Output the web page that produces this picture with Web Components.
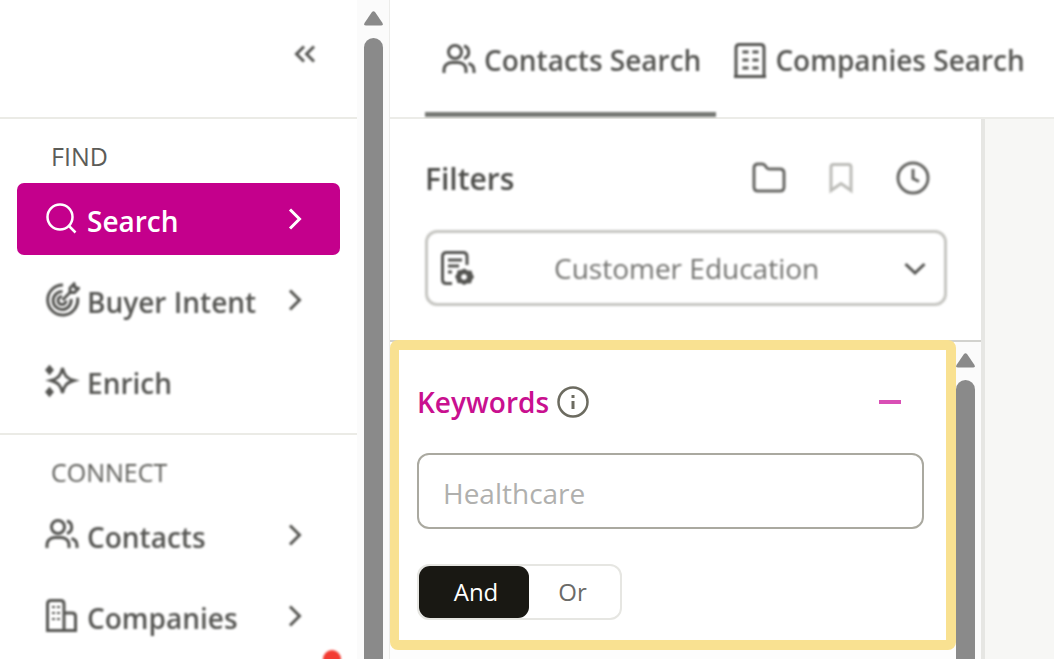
<!DOCTYPE html>
<html lang="en">
<head>
<meta charset="utf-8">
<meta name="viewport" content="width=device-width, initial-scale=1">
<title>Contacts Search</title>
<style>
  body { margin: 0; background: #fff; font-family: "Open Sans", "Noto Sans", sans-serif; color: #4a4a47; }
</style>
</head>
<body>
<search-app></search-app>

<script>
const define = (name, html, setup) => {
  const template = document.createElement('template');
  template.innerHTML = '<style>*{box-sizing:border-box}</style>' + html;
  customElements.define(name, class extends HTMLElement {
    constructor() {
      super();
      this.attachShadow({ mode: 'open' }).append(template.content.cloneNode(true));
    }
    connectedCallback() { if (setup) setup(this, this.shadowRoot); }
  });
};

const ICONS = {
  search: '<circle cx="16" cy="16" r="12.500"/><path d="M25 25l6.500 6.500"/>',
  target: '<path d="M19 3A15 15 0 1 0 33.500 15.500"/><path d="M18.500 9.500A9 9 0 1 0 27 17"/><path d="M18 14.500a4 4 0 1 0 4 4"/><path d="M18.500 18L26 10.500M26 10.500V6l4-4 1 3.500 3.500 1-4 4z"/>',
  sparkle: '<path d="M18.500 5c1.500 7 4 10.500 11.500 12.500-7.500 2-10 5.500-11.500 12.500-1.500-7-4-10.500-11.500-12.500 7.500-2 10-5.500 11.500-12.500z"/><path fill="currentColor" d="M5.500 4l2.500 3-2.500 3L3 7zM5.500 26l2.500 3-2.500 3L3 29z"/>',
  people: '<circle cx="14" cy="10" r="6.500"/><path d="M3 31v-3c0-5 4-7.500 8-7.500h6c4 0 8 2.500 8 7.500v3M23 4a6.500 6.500 0 0 1 0 12.500M27.500 21.500c3.500 1 5.500 3.500 5.500 7V31"/>',
  buildings: '<path d="M2 32.500h31M3.500 32V6q0-3.500 3.500-3.500h9.500Q20 2.500 20 6v26M20 15h8q3.500 0 3.500 3.500V32"/><path stroke-width="2" stroke-dasharray="3 2" d="M8 9h8M8 15h8M8 21h8"/>',
  building: '<path d="M2 34.500h32M4 34V6q0-3.500 3.500-3.500h21Q32 2.500 32 6v28"/><path stroke-dasharray="6 4" d="M10.500 10h16M10.500 18h16M10.500 26h16"/>',
  folder: '<path d="M3 8q0-4 4-4h4q2 0 3 1.500l1.500 2q1 1.500 3 1.500H29q4 0 4 4v14q0 4-4 4H7q-4 0-4-4z"/>',
  bookmark: '<path d="M8 30.500V7q0-2.500 2.500-2.500h15Q28 4.500 28 7v23.500l-10-7z"/>',
  clock: '<circle cx="18" cy="18" r="15"/><path d="M18 9v9.500l6 3"/>',
  report: '<path d="M13 33.500H7.500q-4 0-4-4v-23q0-4 4-4H24q4 0 4 4V15M9 10h14M9 16h11M9 22h4"/><path fill="currentColor" stroke="none" fill-rule="evenodd" d="M25.500 18.500l3 2 4 .2 1 3.300 1.500 3-2 3-1 3.300-4 .2-3 1.500-3-1.700-3.500-.3-1-3.500-1.500-3 2-3 .5-3 3.500-.5zM25 24a3 3 0 1 0 .1 0z"/>',
  info: '<circle cx="18" cy="18" r="14.500"/><path stroke-width="3" d="M18 17v8M18 11v3"/>',
  right: '<path d="M13 8.500l9.500 9.500-9.500 9.500"/>',
  down: '<path d="M8.500 14l9.500 9 9.500-9"/>',
  collapse: '<path d="M17 10.500L9.500 18l7.500 7.500M27 10.500L19.500 18l7.500 7.500"/>',
  minus: '<path stroke-width="4" d="M7 18h22"/>'
};

define('ui-icon', `
  <style>:host{display:block;flex:none;width:36px;height:36px} svg{display:block;width:100%;height:100%}</style>
  <svg viewBox="0 0 36 36" fill="none" stroke="currentColor" aria-hidden="true"></svg>`,
  (el, root) => {
    const svg = root.querySelector('svg');
    svg.setAttribute('stroke-width', el.getAttribute('weight') || '3');
    svg.innerHTML = ICONS[el.getAttribute('name')] || '';
  });

define('scroll-rail', `
  <style>
    :host{display:flex;flex-direction:column;align-items:center;gap:12px;background:#fbfbfb}
    svg{display:block;flex:none;width:19px;height:15px}
    i{display:block;width:19px;flex:1;background:#8a8a8a;border-radius:10px 10px 0 0}
  </style>
  <svg viewBox="0 0 19 15" aria-hidden="true"><path fill="#8a8a8a" d="M8 1q1.500-1.500 3 0l7.500 11q1 2.500-1.500 2.500H2Q-.500 14.500.500 12z"/></svg><i></i>`);

define('nav-item', `
  <style>
    :host{display:block;filter:blur(1px)}
    :host([current]){filter:none}
    a{display:flex;align-items:center;gap:7px;height:72px;padding:0 27px;border-radius:7px;color:#555552;
      font-size:28px;line-height:36px;font-weight:600;text-decoration:none;white-space:nowrap}
    span{flex:1;padding-top:4px}
    :host([current]) a{background:#c4008c;color:#fff}
  </style>
  <a href="#"><span><slot></slot></span></a>`,
  (el, root) => {
    const link = root.querySelector('a');
    const makeIcon = (name, weight) => {
      const icon = document.createElement('ui-icon');
      icon.setAttribute('name', name);
      icon.setAttribute('weight', weight);
      return icon;
    };
    const current = el.hasAttribute('current');
    if (current) link.setAttribute('aria-current', 'page');
    link.prepend(makeIcon(el.getAttribute('icon'), current ? '2.5' : '3'));
    if (!el.hasAttribute('leaf')) link.append(makeIcon('right', '3'));
  });

define('nav-section', `
  <style>
    :host{display:block;padding:0 17px 16px;border-top:2px solid #ebebe6}
    h2{margin:0;padding:19px 0 9px 34px;font-size:25px;line-height:36px;font-weight:400;color:#5c5c58}
    :host([soft]) h2{filter:blur(1px)}
    div{display:flex;flex-direction:column;gap:9px}
  </style>
  <h2></h2><div><slot></slot></div>`,
  (el, root) => { root.querySelector('h2').textContent = el.getAttribute('heading'); });

define('side-nav', `
  <style>
    :host{display:flex;border-right:1px solid #ececea;overflow:hidden}
    nav{flex:1;min-width:0}
    header{display:flex;justify-content:flex-end;align-items:center;height:117px;padding:0 34px 10px 0}
    button{padding:0;border:0;background:none;color:#555552;filter:blur(1px)}
    .dot{width:18px;height:18px;margin:-18px 16px 0 auto;border-radius:50%;background:#f23b32;filter:blur(1px)}
    scroll-rail{width:32px;padding-top:11px}
  </style>
  <nav aria-label="Main">
    <header><button aria-label="Collapse menu"><ui-icon name="collapse"></ui-icon></button></header>
    <nav-section heading="FIND">
      <nav-item icon="search" current>Search</nav-item>
      <nav-item icon="target">Buyer Intent</nav-item>
      <nav-item icon="sparkle" leaf>Enrich</nav-item>
    </nav-section>
    <nav-section heading="CONNECT" soft>
      <nav-item icon="people">Contacts</nav-item>
      <nav-item icon="buildings">Companies</nav-item>
    </nav-section>
    <div class="dot"></div>
  </nav>
  <scroll-rail></scroll-rail>`);

define('search-tab', `
  <style>
    :host{display:flex}
    a{display:flex;align-items:center;gap:7px;padding:7px 15px 0 16px;color:#555552;filter:blur(1px);
      border-bottom:5px solid transparent;font-size:28px;line-height:36px;font-weight:600;text-decoration:none;white-space:nowrap}
    :host([active]) a{border-color:#767874}
  </style>
  <a href="#"><slot name="icon"></slot><slot></slot></a>`);

define('filter-header', `
  <style>
    :host{display:block;padding:39px 34px 34px 35px;border-bottom:2px solid #d2d2ce}
    .row{display:flex;align-items:center;gap:36px;height:40px;filter:blur(1px)}
    h1{flex:1;margin:0;padding-top:2px;font-size:30px;line-height:40px;font-weight:600;color:#4c4c49}
    button{padding:0;border:0;background:none;color:#666663}
    button:disabled{color:#bcbcb8}
    .last{padding-right:16px}
    .box{display:grid;align-items:center;margin-top:32px;filter:blur(1px);color:#555552}
    .box > *{grid-area:1/1}
    select{appearance:none;width:100%;height:76px;padding:0 60px 0 126px;border:3px solid #c6c6c2;border-radius:12px;
      background:#fff;color:#737370;font:400 28px/36px "Open Sans","Noto Sans",sans-serif}
    .lead{margin-left:14px;pointer-events:none}
    .arrow{margin-right:14px;justify-self:end;pointer-events:none}
  </style>
  <div class="row">
    <h1>Filters</h1>
    <button aria-label="Saved folders"><ui-icon name="folder"></ui-icon></button>
    <button aria-label="Save filter" disabled><ui-icon name="bookmark"></ui-icon></button>
    <button class="last" aria-label="Recent"><ui-icon name="clock"></ui-icon></button>
  </div>
  <div class="box">
    <select aria-label="Saved filter"><option>Customer Education</option></select>
    <ui-icon class="lead" name="report"></ui-icon>
    <ui-icon class="arrow" name="down"></ui-icon>
  </div>`);

define('and-or-toggle', `
  <style>
    :host{display:block}
    fieldset{display:inline-flex;margin:0;padding:0;border:2px solid #e6e6e2;border-radius:12px;height:56px;min-width:0;vertical-align:top}
    label{position:relative;display:flex;align-items:center;justify-content:center;width:91px;padding-right:4px;font-size:24px;line-height:32px;color:#6b6b68}
    label:first-child{width:110px;padding:0 0 0 4px}
    label:has(:checked){background:#191813;color:#fff;border-radius:11px}
    input{position:absolute;inset:0;margin:0;width:100%;height:100%;opacity:0}
  </style>
  <fieldset aria-label="Match">
    <label><input type="radio" name="match" checked>And</label>
    <label><input type="radio" name="match">Or</label>
  </fieldset>`);

define('keyword-card', `
  <style>
    :host{display:block;flex:1;min-width:0;padding:0 22px 20px 18px;border:solid #f9e191;border-width:10px 10px 10px 9px;border-radius:8px;background:#fff}
    header{display:flex;align-items:center;height:103px}
    label{font-size:28px;line-height:36px;font-weight:600;color:#c9108f}
    .info{margin:0 auto 0 6px;padding:0;border:0;background:none;color:#6c6b60}
    .fold{margin-right:16px;padding:0;border:0;background:none;color:#d94fb5}
    #kw{display:block;width:100%;height:76px;margin-bottom:35px;padding:4px 24px 0;border:2px solid #aaa9a0;border-radius:12px;
      background:#fff;font:400 28px/36px "Open Sans","Noto Sans",sans-serif;color:#4a4a47}
    #kw::placeholder{color:#b0b0ae;opacity:1}
  </style>
  <header>
    <label for="kw">Keywords</label>
    <button class="info" aria-label="About keywords"><ui-icon name="info" weight="2.5"></ui-icon></button>
    <button class="fold" aria-label="Collapse"><ui-icon name="minus"></ui-icon></button>
  </header>
  <input id="kw" type="text" placeholder="Healthcare">
  <and-or-toggle></and-or-toggle>`);

define('search-app', `
  <style>
    :host{display:grid;grid-template-columns:390px minmax(0,1fr);height:100vh;overflow:hidden}
    main{display:flex;flex-direction:column;min-width:0;min-height:0;overflow:hidden}
    .tabs{display:flex;height:119px;padding-left:35px;border-bottom:2px solid #ecece8}
    .body{flex:1;display:grid;grid-template-columns:minmax(0,595px) minmax(0,1fr);background:#f7f7f5;min-height:0}
    .panel{display:flex;flex-direction:column;min-height:0;background:#fff;border-right:4px solid #e6e6e3}
    .list{display:flex;align-items:flex-start;flex:1;min-height:0;background:#fdfdfd}
    .list keyword-card{margin-top:-2px}
    .list scroll-rail{align-self:stretch;width:25px;padding:11px 6px 0 0}
  </style>
  <side-nav></side-nav>
  <main>
    <div class="tabs">
      <search-tab active><ui-icon slot="icon" name="people"></ui-icon>Contacts Search</search-tab>
      <search-tab><ui-icon slot="icon" name="building"></ui-icon>Companies Search</search-tab>
    </div>
    <div class="body">
      <section class="panel">
        <filter-header></filter-header>
        <div class="list"><keyword-card></keyword-card><scroll-rail></scroll-rail></div>
      </section>
    </div>
  </main>`);
</script>
</body>
</html>
